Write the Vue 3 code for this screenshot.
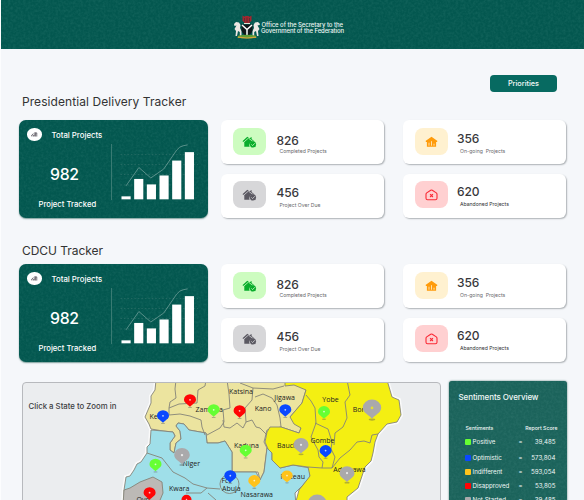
<script setup>
const sections = [
  { title: 'Presidential Delivery Tracker', key: 'delivery' },
  { title: 'CDCU Tracker', key: 'cdcu' },
]

const stats = [
  { key: 'completed', value: 826, label: 'Completed Projects', icon: 'check' },
  { key: 'ongoing', value: 356, label: 'On-going  Projects', icon: 'chart' },
  { key: 'overdue', value: 456, label: 'Project Over Due', icon: 'check' },
  { key: 'abandoned', value: 620, label: 'Abandoned Projects', icon: 'cross' },
]

const bars = [3, 20.5, 15, 24, 39, 47.5]

const sentiments = [
  { key: 'positive', label: 'Positive', score: '39,485' },
  { key: 'optimistic', label: 'Optimistic', score: '573,804' },
  { key: 'indifferent', label: 'Indifferent', score: '593,054' },
  { key: 'disapproved', label: 'Disapproved', score: '53,805' },
  { key: 'idle', label: 'Not Started', score: '39,485' },
]

const regions = [
  { fill: '#ece49f', d: 'M156 380L155 390 151 396 151 403 145 417 149 424 151 429 163 431 173 432 175 436 170 443 170 450 174 453 176 443 181 439 180 431 176 426 178 423 184 424 189 430 206 433 207 443 218 443 225 441 232 452 232 472 258 472 260 480 264 472 267 448 264 442 267 430 281 427 299 433 301 428 290 417 302 403 306 390 306 380Z' },
  { fill: '#9fdfe9', d: 'M151 430L150 444 147 447 147 453 141 462 137 464 134 470 130 476 126 477 124 490 124 505 296 505 295 493 303 485 310 477 310 468 293 465 280 468 272 460 272 453 267 448 264 472 260 480 256 472 232 472 232 452 225 441 218 443 207 443 206 433 189 430 184 424 178 423 176 426 180 431 181 439 176 443 174 453 170 450 170 443 175 436 173 432 163 431Z' },
  { fill: '#f4ef12', d: 'M285 386L294 385 306 390 302 403 290 417 294 424 301 428 299 433 281 427 270 427 267 432 265 442 268 449 272 453 272 460 280 468 293 465 308 467 310 476 303 485 299 490 295 505 347 505 347 497 358 488 365 467 371 461 373 453 375 442 378 434 387 424 397 422 401 415 399 400 392 397 387 380 285 380Z' },
  { fill: '#bcb9b6', d: 'M124 490L130 488 140 482 153 477 162 482 163 493 158 505 123 505Z' },
]

const borders = [
  'M176 380L175 389 176 398 170 402 169 408 179 404 197 403 198 390 205 386 206 380',
  'M169 408L169 415 180 414 190 416 201 420 202 427 205 435',
  'M227 380L229 394 230 408 223 410 224 422 220 428 207 435',
  'M223 420L224 427 230 428 237 423 243 428 246 422 252 420 256 427 260 428 267 435',
  'M240 383L253 388 252 400 245 408 246 422',
  'M253 388L273 389 284 386 M255 397L263 394 272 398 277 405 280 418 281 427',
  'M306 395L311 401 315 408 316 423 311 437 318 450 319 457 323 462 322 468',
  'M315 423L328 429 332 442 331 449 335 457 332 468',
  'M347 380L350 395 345 402 347 418 343 427 335 433 334 445',
  'M308 467L322 468 332 468 340 458 350 450 357 442 364 441 370 443 372 435 378 434',
  'M147 453L162 458 173 472 185 478 193 484 207 488 220 489',
  'M186 493L201 493 207 488 M208 493L216 500',
]

const labels = [
  { t: 'Kebbi', x: 149.5, y: 419 }, { t: 'Zamfara', x: 195.5, y: 412.3 },
  { t: 'Katsina', x: 229, y: 394 }, { t: 'Kano', x: 254.7, y: 411.3 },
  { t: 'Jigawa', x: 274.3, y: 400.3 }, { t: 'Yobe', x: 322.3, y: 401.5 },
  { t: 'Borno', x: 352.7, y: 412.4 }, { t: 'Niger', x: 182.5, y: 466 },
  { t: 'Kaduna', x: 234, y: 448 }, { t: 'Bauchi', x: 277, y: 448.3 },
  { t: 'Gombe', x: 310.5, y: 442.6 }, { t: 'Adamawa', x: 333.3, y: 472 },
  { t: 'Plateau', x: 280.5, y: 479.2 }, { t: 'Kwara', x: 169, y: 491 },
  { t: 'Fct', x: 221.5, y: 482.5 }, { t: 'Abuja', x: 222, y: 490.5 },
  { t: 'Nasarawa', x: 240.5, y: 497.3 }, { t: 'Oyo', x: 136.5, y: 501.5 },
]

const pins = [
  { c: '#ff0505', x: 190, y: 400.5, r: 6 }, { c: '#0a48ff', x: 163, y: 416.5, r: 6 },
  { c: '#66ff33', x: 213.7, y: 410.5, r: 6 }, { c: '#ff0505', x: 239.6, y: 411.5, r: 6 },
  { c: '#0a48ff', x: 285.3, y: 410.5, r: 6 }, { c: '#66ff33', x: 324, y: 412.3, r: 6 },
  { c: '#aaa9ab', x: 372, y: 409, r: 9.2 }, { c: '#aaa9ab', x: 182, y: 456, r: 7.8 },
  { c: '#66ff33', x: 155.5, y: 465, r: 6 }, { c: '#66ff33', x: 245.7, y: 451, r: 6 },
  { c: '#aaa9ab', x: 301, y: 445.7, r: 7.5 }, { c: '#0a48ff', x: 325.6, y: 451.3, r: 6 },
  { c: '#aaa9ab', x: 347, y: 474, r: 7.5 }, { c: '#ffc31c', x: 254.3, y: 481.3, r: 6 },
  { c: '#ffc31c', x: 287, y: 476.3, r: 5.7 }, { c: '#0a48ff', x: 230.3, y: 476.4, r: 6 },
  { c: '#ff0505', x: 149.6, y: 493.4, r: 6 }, { c: '#ff0505', x: 186.5, y: 500, r: 5 },
  { c: '#aaa9ab', x: 317.2, y: 504, r: 9.2 },
]
</script>

<template>
  <div class="page">
    <svg class="defs" width="0" height="0">
      <filter id="grain" x="0" y="0" width="100%" height="100%">
        <feTurbulence type="fractalNoise" baseFrequency=".4" numOctaves="2" seed="4" />
        <feColorMatrix values="0 0 0 0 .45  0 0 0 0 .8  0 0 0 0 .74  .9 0 0 0 -.3" />
      </filter>
    </svg>
    <header class="topbar grain">
      <svg class="noise"><rect width="100%" height="100%" filter="url(#grain)" /></svg>
      <svg class="crest" viewBox="0 0 28 24" width="28" height="24">
        <path d="M9.500 .5l2 1.200 1-.8h3l1 .8 2-1.200v5.200l-2.300 2.300h-4.400L9.500 5.700z" fill="#a3262f" />
        <path d="M11.500 3v3.500M14 2.500v5M16.500 3v3.500" stroke="#3c3433" stroke-width=".7" />
        <path d="M11 8.500h6" stroke="#dfe8d8" stroke-width="1" />
        <path d="M1 9l2-2 3 .5 1.500 2.500L7 13l1.500 3v5H6.800v-4L5 16l-1 5H2.500l.5-5-1.500-2 2-3.500L1.500 11z" fill="#eee8e4" />
        <path d="M27 9l-2-2-3 .5-1.500 2.500L21 13l-1.500 3v5h1.700v-4l1.800-1 1 5h1.500l-.5-5 1.500-2-2-3.500 2-.5z" fill="#eee8e4" />
        <path d="M8.500 9.500h11V15q-.5 4-5.500 6-5-2-5.500-6z" fill="#10181a" />
        <path d="M9 10l5 4.500 5-4.500M14 14v6" fill="none" stroke="#fff" stroke-width="1.500" />
        <path d="M5.500 20.500q8.500-1.500 17 0l1.500 2q-10 1.800-20 0z" fill="#5f9d36" />
        <path d="M5 22.200q9 1.600 18 0" fill="none" stroke="#d8a33a" stroke-width="1.200" />
      </svg>
      <div class="office">
        <span class="office-top">Office of the Secretary to the</span>
        <span class="office-bottom">Government of the Federation</span>
      </div>
    </header>

    <main class="content">
      <div class="actions"><button class="priorities">Priorities</button></div>

      <section v-for="s in sections" :key="s.key" class="tracker" :class="s.key">
        <h2>{{ s.title }}</h2>
        <div class="tracker-body">
          <article class="total grain">
            <svg class="noise"><rect width="100%" height="100%" filter="url(#grain)" /></svg>
            <div class="summary">
              <div class="summary-head">
                <span class="badge">
                  <svg viewBox="0 0 8 6" width="7" height="5.250">
                    <path d="M.8 5V3.600L2.600 2M2.500 5V3.200M3.200 1.500L5 .9v4.300M6.600 1v4.200M3.500 5.200V3.300h1.500M5 1h1.600" fill="none" stroke="#302b35" stroke-width=".75" />
                  </svg>
                </span>
                <span>Total Projects</span>
              </div>
              <strong>982</strong>
              <span class="tracked">Project Tracked</span>
            </div>
            <svg class="chart" viewBox="0 0 78 56" width="78" height="56">
              <path d="M0 10.500H78M0 20.500H78M0 30.500H72M0 41H60" stroke="#39766f" stroke-width=".6" stroke-dasharray="1.500 2" />
              <path d="M5.500 42L18.500 23.500 30.500 34 43.500 25 56.500 6q3-4 7-4.500L67.500 .7" fill="none" stroke="#7da9a3" stroke-width=".7" />
              <rect v-for="(h, i) in bars" :key="i" :x="1 + i * 12.750" :y="55.500 - h" width="9.200" :height="h" fill="#fff" />
            </svg>
          </article>

          <div class="stats">
            <article v-for="c in stats" :key="c.key" class="stat" :class="c.key">
              <span class="icon">
                <svg v-if="c.icon === 'check'" viewBox="0 0 15 12" width="15" height="12">
                  <path d="M.4 5.200L5.300.8 7.500 2.300 9.600 1v2l2.400 2-.9.900A3.400 3.400 0 0 0 7.600 10.700H2.300V6.200z" fill="currentColor" />
                  <path d="M.9 6.900L6.400 2.100 11 5.500" fill="none" class="seam" />
                  <circle cx="11" cy="8.400" r="3.100" fill="currentColor" />
                  <path d="M9.400 8.400l1.200 1.200 2.100-2.300" fill="none" class="seam" />
                </svg>
                <svg v-else-if="c.icon === 'chart'" viewBox="0 0 13 12" width="13" height="12">
                  <path d="M6.500.8L12.500 5l-.6.900h-.8v4.800H1.900V5.900h-.8L.5 5z" fill="currentColor" />
                  <path d="M4 6.700v3M6.500 5.200v4.500M9 7.700v2" class="seam" />
                </svg>
                <svg v-else viewBox="0 0 13 12" width="13" height="12">
                  <path d="M1 5.200q0-.8.700-1.300L5.700 1.200q.8-.5 1.600 0L11.300 3.900q.7.500.7 1.300v4q0 1.600-1.600 1.600H2.600Q1 10.800 1 9.200z" fill="none" stroke="currentColor" stroke-width="1.100" />
                  <path d="M5.100 5.200l2.800 2.800M7.900 5.200L5.100 8" stroke="currentColor" stroke-width="1.200" />
                </svg>
              </span>
              <div class="figures">
                <strong>{{ c.value }}</strong>
                <span>{{ c.label }}</span>
              </div>
            </article>
          </div>
        </div>
      </section>

      <section class="lower">
        <div class="map">
          <svg viewBox="23 383 417 117" width="417" height="117">
            <path v-for="(r, i) in regions" :key="'h' + i" :d="r.d" fill="#fff" stroke="#fafafa" stroke-width="4" />
            <path v-for="(r, i) in regions" :key="i" :d="r.d" :fill="r.fill" class="edge" />
            <path v-for="(b, i) in borders" :key="'b' + i" :d="b" fill="none" class="edge" />
            <circle cx="229.500" cy="484" r="9.500" fill="none" class="edge" />
            <text v-for="l in labels" :key="l.t" :x="l.x" :y="l.y">{{ l.t }}</text>
            <g v-for="(p, i) in pins" :key="'p' + i" :transform="`translate(${p.x} ${p.y}) scale(${p.r})`">
              <ellipse cy="1.150" rx=".35" ry=".12" fill="#555" opacity=".4" />
              <path d="M-1-.15A1 .88 0 0 1 1-.15C1 .4.45.6 0 1.050-.45.6-1 .4-1-.15z" :fill="p.c" />
              <circle cy="-.12" r=".15" :fill="p.r > 9 ? '#f4ef12' : '#fff'" opacity=".75" />
            </g>
          </svg>
          <p class="hint">Click a State to Zoom in</p>
        </div>

        <aside class="overview grain">
          <svg class="noise"><rect width="100%" height="100%" filter="url(#grain)" /></svg>
          <h3>Sentiments Overview</h3>
          <div class="legend-head"><span>Sentiments</span><span>Report Score</span></div>
          <ul>
            <li v-for="row in sentiments" :key="row.key" :class="row.key">
              <i></i><span>{{ row.label }}</span><b>=</b><em>{{ row.score }}</em>
            </li>
          </ul>
        </aside>
      </section>
    </main>
  </div>
</template>

<style>
body { margin: 0; overflow: hidden; }
</style>

<style scoped>
* { box-sizing: border-box; }
.page {
  width: 584px; height: 500px; overflow: hidden;
  background: #f5f7fa; border-left: 1.500px solid #fcfdfe;
  font-family: Inter, "Liberation Sans", sans-serif; color: #333;
}
.defs { position: absolute; }
.grain { position: relative; isolation: isolate; overflow: hidden; }
.noise { position: absolute; inset: 0; width: 100%; height: 100%; z-index: -1; opacity: .16; }
.topbar {
  height: 49px; display: flex; justify-content: center; align-items: flex-start;
  padding: 14.500px 8px 0 0; background: #03574f; color: #eef6f4;
}
.crest { flex: none; }
.office { display: flex; flex-direction: column; padding-top: 7px; font-size: 6px; line-height: 6.500px; font-weight: 500; white-space: nowrap; }
.office-top { padding-left: .5px; letter-spacing: -.06px; }
.office-bottom { letter-spacing: -.1px; }

.content { padding: 26px 17px 0 18px; }
.actions { display: flex; justify-content: flex-end; height: 17px; padding-right: 10px; }
.priorities {
  width: 67px; height: 17px; padding: 0; border: 0; border-radius: 4px;
  background: #076a61; color: #f4fbf9; font: 500 7.300px/17px Inter, sans-serif;
}
.tracker h2 { margin: 0; padding-left: 3px; font-size: 12px; font-weight: 400; line-height: 18px; white-space: nowrap; color: #333; }
.delivery h2 { margin-top: 1px; margin-bottom: 8.500px; letter-spacing: .07px; }
.cdcu h2 { margin-top: 24px; margin-bottom: 3.500px; letter-spacing: -.05px; }
.tracker-body { display: flex; gap: 13.500px; height: 98.500px; }
.total {
  flex: none; width: 188.500px; height: 98px; display: flex; border-radius: 7px;
  background: #03574f; color: #fff; box-shadow: 0 1px 1.500px #7b9e9a;
}
.summary { width: 92px; height: 98px; padding: 8.500px 0 0 8px; display: flex; flex-direction: column; }
.summary-head { display: flex; align-items: center; gap: 10px; height: 13px; font-size: 7.800px; font-weight: 500; white-space: nowrap; }
.badge { width: 14.500px; height: 12.500px; border-radius: 50%; background: #fff; display: grid; place-items: center; }
.total strong { margin: 23.500px 0 0 23px; font-size: 15.800px; line-height: 20px; font-weight: 500; letter-spacing: -.3px; }
.tracked { margin: 15.500px 0 0 11.500px; font-size: 7.700px; line-height: 10px; font-weight: 500; white-space: nowrap; }
.chart { margin: 24.500px 0 0 -.5px; padding-left: 8.500px; width: 87px; border-left: 1px solid #397b73; }

.stats { display: grid; grid-template-columns: 163px 162.500px; grid-template-rows: 44.500px 44.500px; column-gap: 19px; row-gap: 9.500px; }
.stat { display: flex; padding: 8.500px 0 0 12px; border-radius: 6px; background: #fff; box-shadow: 1px 1px 1.500px #aeb2b6; }
.overdue, .abandoned { padding-top: 7.500px; }
.icon { flex: none; width: 33px; height: 27px; border-radius: 8px; display: grid; place-items: center; }
.seam { stroke-width: .8; }
.completed .icon { background: #cdfcc0; color: #0aad2c; }
.completed .seam { stroke: #cdfcc0; }
.overdue .icon { background: #d7d7d9; color: #5b5962; }
.overdue .seam { stroke: #d7d7d9; }
.ongoing .icon { background: #fff1d0; color: #ff9b0b; }
.ongoing .seam { stroke: #fff1d0; }
.abandoned .icon { background: #ffd0d1; color: #fa2a36; }
.figures { display: flex; flex-direction: column; padding-left: 10.500px; white-space: pre; }
.figures strong { margin-top: 4.500px; margin-bottom: .5px; font-size: 12px; font-weight: 500; line-height: 15px; letter-spacing: -.1px; color: #38383b; }
.figures span { padding-left: 3px; font-size: 5.100px; line-height: 7px; color: #68686b; }
.ongoing .figures, .abandoned .figures { padding-left: 9px; }
.ongoing strong { margin-top: 2.500px; margin-bottom: 2.500px; }
.overdue strong { margin-top: 3.500px; margin-bottom: 2px; }
.abandoned strong { margin-top: 2.500px; margin-bottom: 2.500px; }
.abandoned .figures span { color: #303033; }

.lower { display: flex; align-items: flex-start; gap: 8px; margin: 18.500px 0 0 2.500px; }
.map {
  flex: none; width: 419px; height: 125px; position: relative; margin-top: 1px;
  border: 1px solid #b7b9bd; border-radius: 4px; background: #ebedef; overflow: hidden;
}
.map svg { display: block; }
.hint { position: absolute; left: 6px; top: 18px; margin: 0; font-size: 7.800px; line-height: 10px; font-weight: 500; color: #3c3d3f; white-space: nowrap; }
.edge { stroke: #858378; stroke-width: .9; stroke-linejoin: round; }
.map text { font: 500 7px "Open Sans", "Noto Sans", sans-serif; fill: #222; }

.overview { flex: none; width: 118px; height: 130px; padding: 11.500px 9px 0 10px; border-radius: 3px; background: #1b635b; color: #f0f7f6; box-shadow: 0 0 2px #496e6b; }
.overview h3 { margin: 0; font-size: 8px; line-height: 11px; font-weight: 500; letter-spacing: -.08px; white-space: nowrap; }
.legend-head { display: flex; justify-content: space-between; margin: 21.500px 0 0 7px; font-size: 5.200px; line-height: 7px; font-weight: 500; white-space: nowrap; }
.overview ul { list-style: none; margin: 2.500px 0 0 6px; padding: 0; }
.overview li { display: grid; grid-template-columns: 8px 46px 8px 1fr; align-items: center; height: 14px; font-size: 6.200px; line-height: 14px; padding-right: 2px; white-space: nowrap; }
.overview .positive { height: 16px; }
.overview .optimistic { height: 15px; }
.overview i { width: 6px; height: 6px; border-radius: 1px; }
.overview b { font-weight: 500; font-size: 6px; }
.overview em { font-style: normal; text-align: right; }
.positive i { background: #66ff33; }
.optimistic i { background: #0a48ff; }
.indifferent i { background: #ffc31c; }
.disapproved i { background: #ff0505; }
.idle i { background: #aaa9ab; }
</style>
